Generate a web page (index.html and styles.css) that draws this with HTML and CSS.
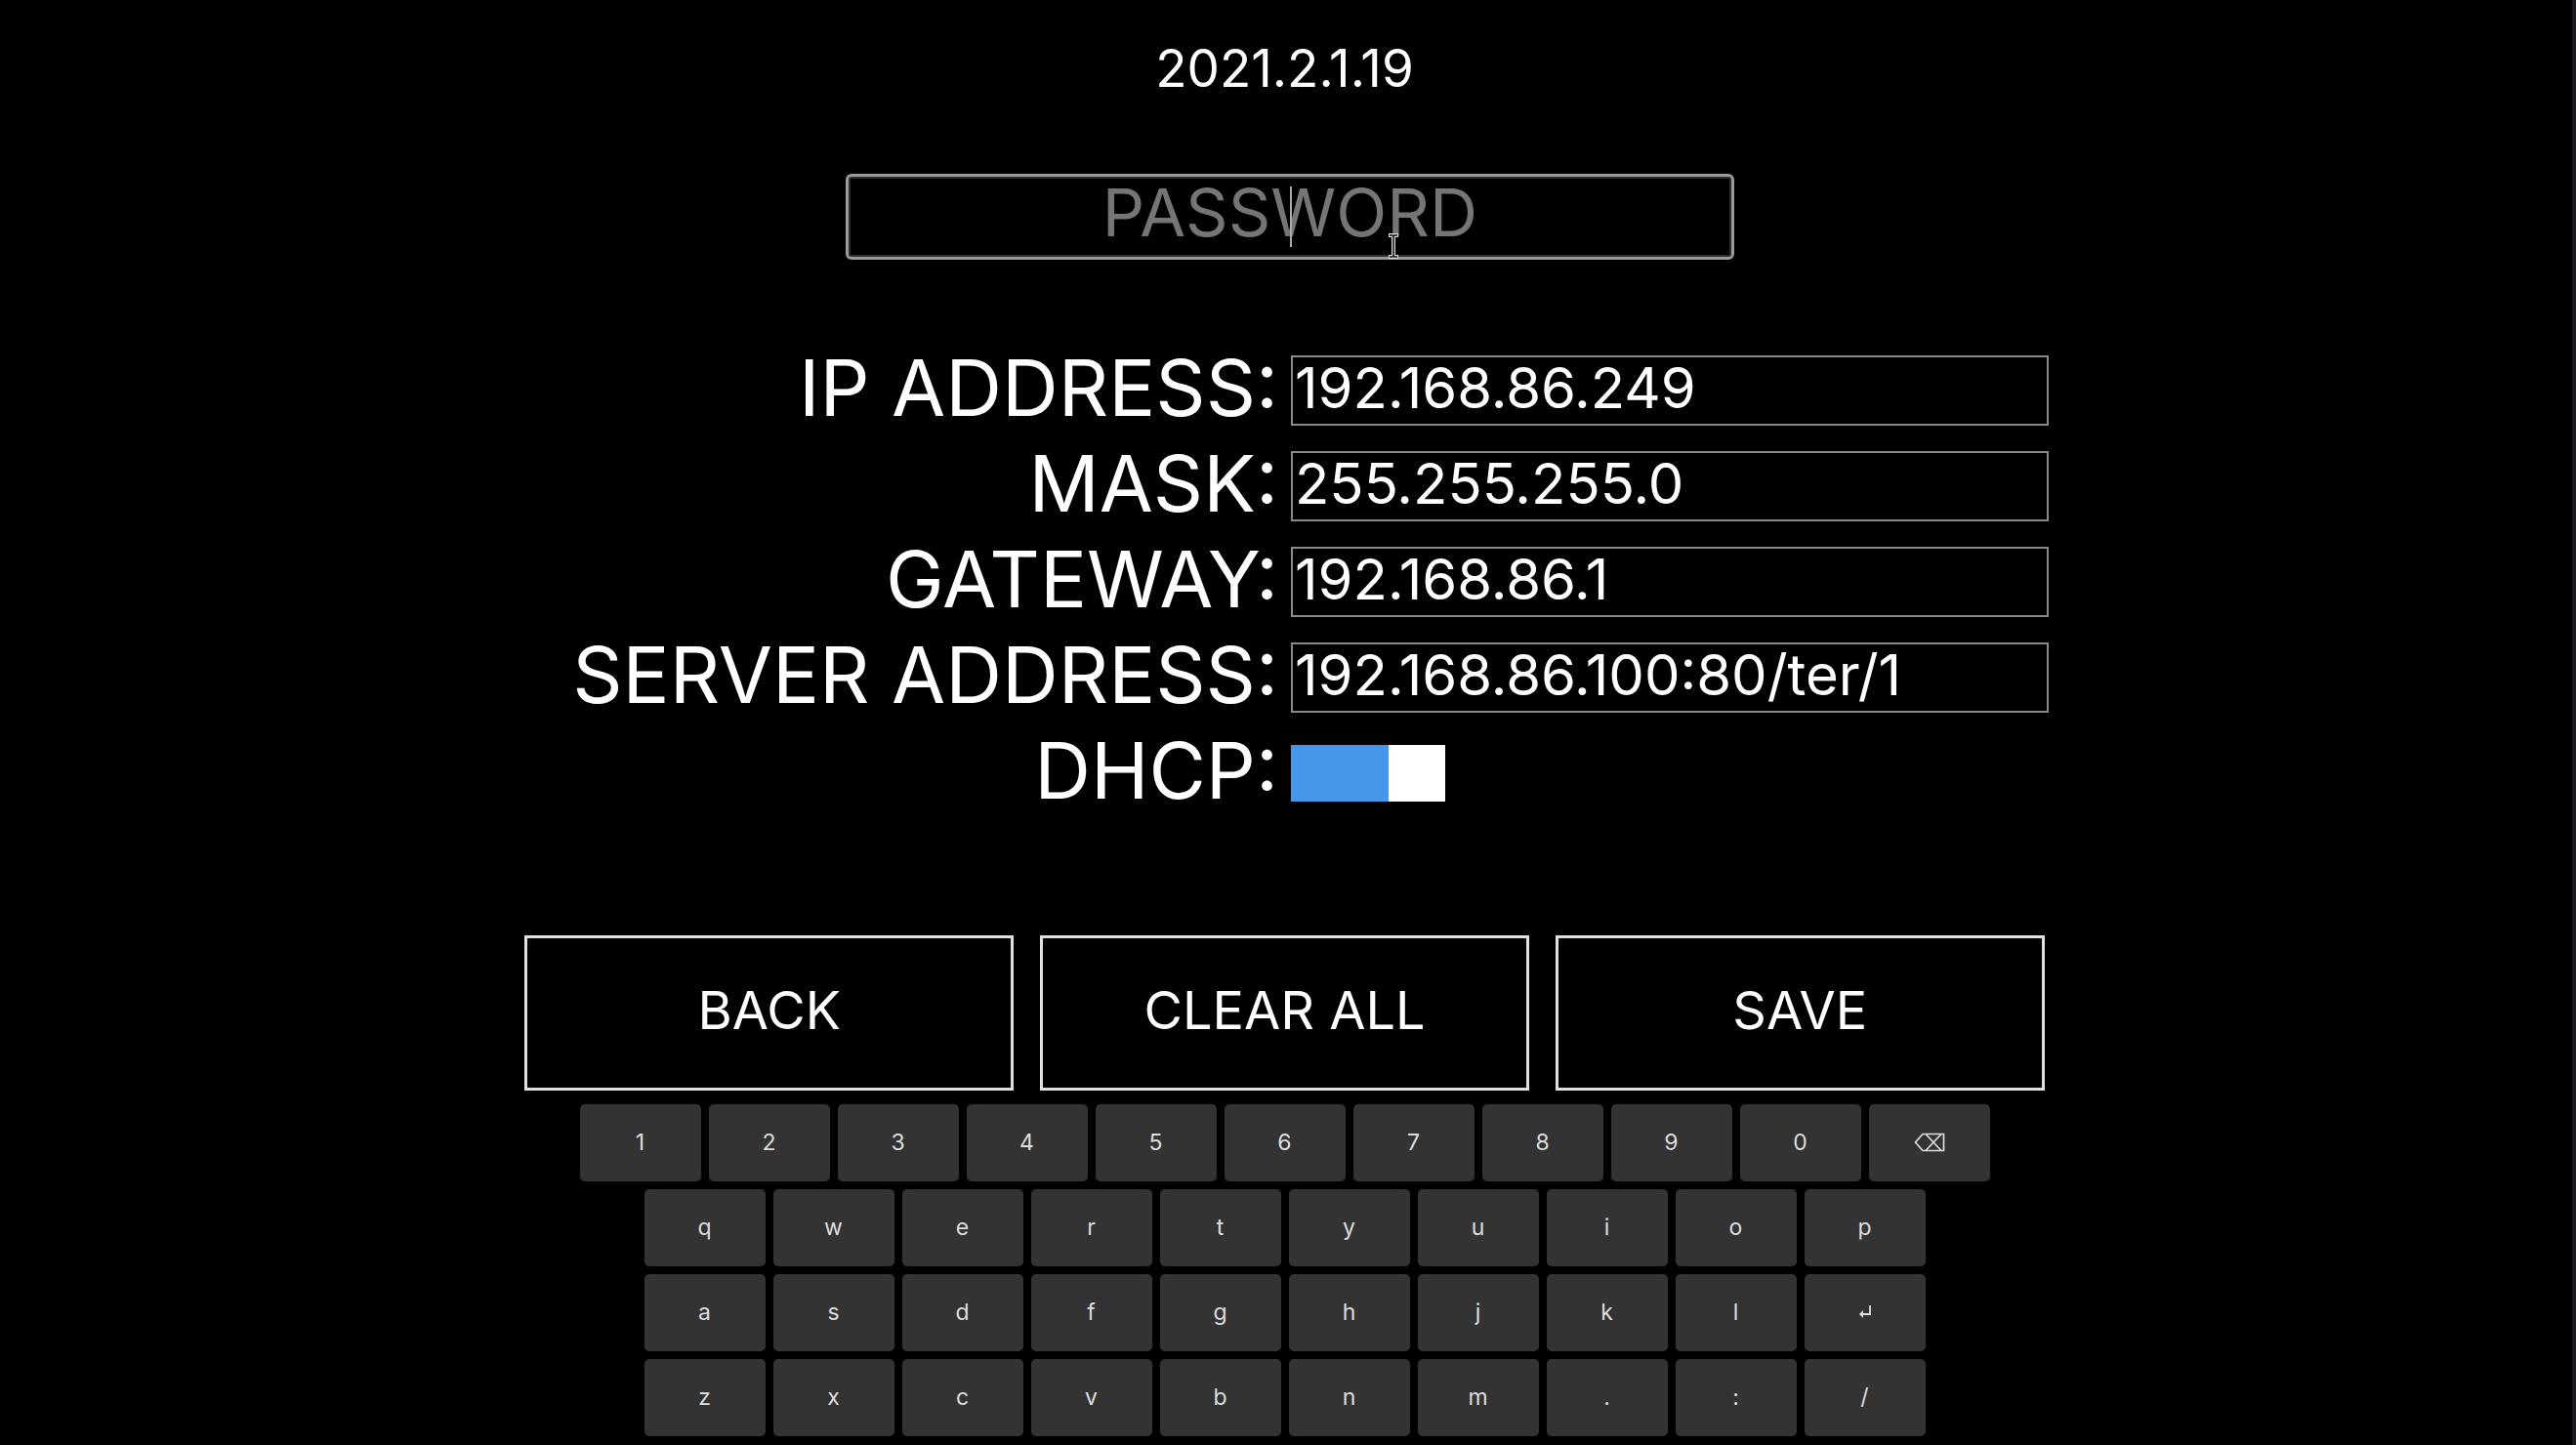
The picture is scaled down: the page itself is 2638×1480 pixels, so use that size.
FILE: index.html
```html
<!DOCTYPE html>
<html lang="en">
<head>
<meta charset="utf-8">
<meta name="viewport" content="width=device-width, initial-scale=1">
<title>Network settings</title>
<link rel="stylesheet" href="styles.css">
</head>
<body>
<main class="page">
  <h1 class="version">2021.2.1.19</h1>

  <form class="settings">
    <div class="password">
      <input class="password-input" type="text" placeholder="PASSWORD" aria-label="Password">
      <span class="caret"></span>
      <svg class="pointer" viewBox="0 0 12 26" aria-hidden="true">
        <path d="M1 2h4l1 1 1-1h4M6 3v20M1 24h4l1-1 1 1h4" fill="none" stroke="#d8d8d8" stroke-width="4"/>
        <path d="M2 2h3l1 1 1-1h3M6 3v20M2 24h3l1-1 1 1h3" fill="none" stroke="#111" stroke-width="1.5"/>
      </svg>
    </div>

    <div class="fields">
      <label class="label" for="ip">IP ADDRESS:</label>
      <input class="field" id="ip" type="text" value="192.168.86.249">
      <label class="label" for="mask">MASK:</label>
      <input class="field" id="mask" type="text" value="255.255.255.0">
      <label class="label" for="gateway">GATEWAY:</label>
      <input class="field" id="gateway" type="text" value="192.168.86.1">
      <label class="label" for="server">SERVER ADDRESS:</label>
      <input class="field" id="server" type="text" value="192.168.86.100:80/ter/1">
      <label class="label" for="dhcp">DHCP:</label>
      <input class="toggle" id="dhcp" type="checkbox" role="switch" checked>
    </div>

    <div class="actions">
      <button class="action" type="button">BACK</button>
      <button class="action" type="button">CLEAR ALL</button>
      <button class="action" type="submit">SAVE</button>
    </div>
  </form>

  <div class="keyboard">
    <div class="keys">
      <button class="key">1</button><button class="key">2</button><button class="key">3</button><button class="key">4</button><button class="key">5</button><button class="key">6</button><button class="key">7</button><button class="key">8</button><button class="key">9</button><button class="key">0</button>
      <button class="key" aria-label="Backspace">
        <svg class="icon-backspace" viewBox="0 0 32 20" aria-hidden="true"><path d="M9 1.500H30.500V18.500H9L1.500 10ZM12 1.500L28 18.500M28 1.500L12 18.500" fill="none" stroke="currentColor" stroke-width="1.700"/></svg>
      </button>
    </div>
    <div class="keys">
      <button class="key">q</button><button class="key">w</button><button class="key">e</button><button class="key">r</button><button class="key">t</button><button class="key">y</button><button class="key">u</button><button class="key">i</button><button class="key">o</button><button class="key">p</button>
    </div>
    <div class="keys">
      <button class="key">a</button><button class="key">s</button><button class="key">d</button><button class="key">f</button><button class="key">g</button><button class="key">h</button><button class="key">j</button><button class="key">k</button><button class="key">l</button>
      <button class="key" aria-label="Enter">
        <svg class="icon-enter" viewBox="0 0 14 14" aria-hidden="true"><path d="M12 0V9H4" fill="none" stroke="currentColor" stroke-width="1.800"/><path d="M1 9L5 5V13Z" fill="currentColor"/></svg>
      </button>
    </div>
    <div class="keys">
      <button class="key">z</button><button class="key">x</button><button class="key">c</button><button class="key">v</button><button class="key">b</button><button class="key">n</button><button class="key">m</button><button class="key">.</button><button class="key">:</button><button class="key">/</button>
    </div>
  </div>
</main>
</body>
</html>
```
FILE: styles.css
```css
* {
  box-sizing: border-box;
}

body {
  margin: 0;
  min-height: 100vh;
  background: #000;
  border-right: 4px solid #1c1c20;
  color: #fff;
  font-family: Inter, "Noto Sans", sans-serif;
  font-weight: 400;
}

input,
button {
  margin: 0;
  color: inherit;
  font: inherit;
}

.page {
  display: flex;
  flex-direction: column;
  align-items: center;
  padding: 38px 3px 6px 0;
}

.version {
  margin: 0;
  font-size: 53px;
  font-weight: 400;
  line-height: 64px;
}

.settings {
  display: flex;
  flex-direction: column;
  align-items: center;
  width: 100%;
  padding-top: 76px;
}

.password {
  position: relative;
  width: 34.5vw;
  margin-left: 11px;
}

.password-input {
  display: block;
  width: 100%;
  height: 88px;
  padding: 0 0 10px;
  background: #000;
  border: 3px solid #9a9a9a;
  border-radius: 6px;
  box-shadow: inset 0 0 0 2px #2c2c2c;
  font-size: 68px;
  text-align: center;
}

.password-input::placeholder {
  color: #757575;
  opacity: 1;
}

.caret {
  position: absolute;
  top: 13px;
  left: 50%;
  width: 2px;
  height: 62px;
  background: #aaa;
}

.pointer {
  position: absolute;
  top: 61px;
  left: 61%;
  width: 12px;
  height: 26px;
}

.fields {
  display: grid;
  grid-template-columns: 1fr 1fr;
  gap: 26px 13px;
  align-items: center;
  width: 100%;
  margin-top: 98px;
}

.label {
  padding-bottom: 6px;
  font-size: 80px;
  line-height: 66px;
  text-align: right;
  white-space: nowrap;
}

.field {
  width: 29.4vw;
  height: 72px;
  padding: 0 0 6px 2px;
  background: #000;
  border: 2px solid #8a8a8a;
  font-size: 58px;
}

.toggle {
  appearance: none;
  width: 158px;
  height: 58px;
  background: linear-gradient(to right, #4696ec 100px, #fff 100px);
}

.actions {
  display: grid;
  grid-template-columns: repeat(3, 1fr);
  gap: 27px;
  width: 59vw;
  margin-top: 130px;
}

.action {
  height: 159px;
  padding: 0 0 6px;
  background: #000;
  border: 3px solid #e0e0e0;
  font-size: 54px;
}

.keyboard {
  display: grid;
  grid-template-rows: repeat(4, 1fr);
  gap: 8px;
  height: 340px;
  margin-top: 14px;
}

.keys {
  display: flex;
  justify-content: center;
  gap: 8px;
}

.key {
  display: flex;
  flex: 0 1 124px;
  align-items: center;
  justify-content: center;
  width: 124px;
  padding: 0 0 2px;
  background: #333;
  border: 0;
  border-radius: 5px;
  color: #ddd;
  font-size: 23px;
}

.icon-backspace {
  width: 32px;
  height: 20px;
}

.icon-enter {
  width: 14px;
  height: 14px;
}
```
